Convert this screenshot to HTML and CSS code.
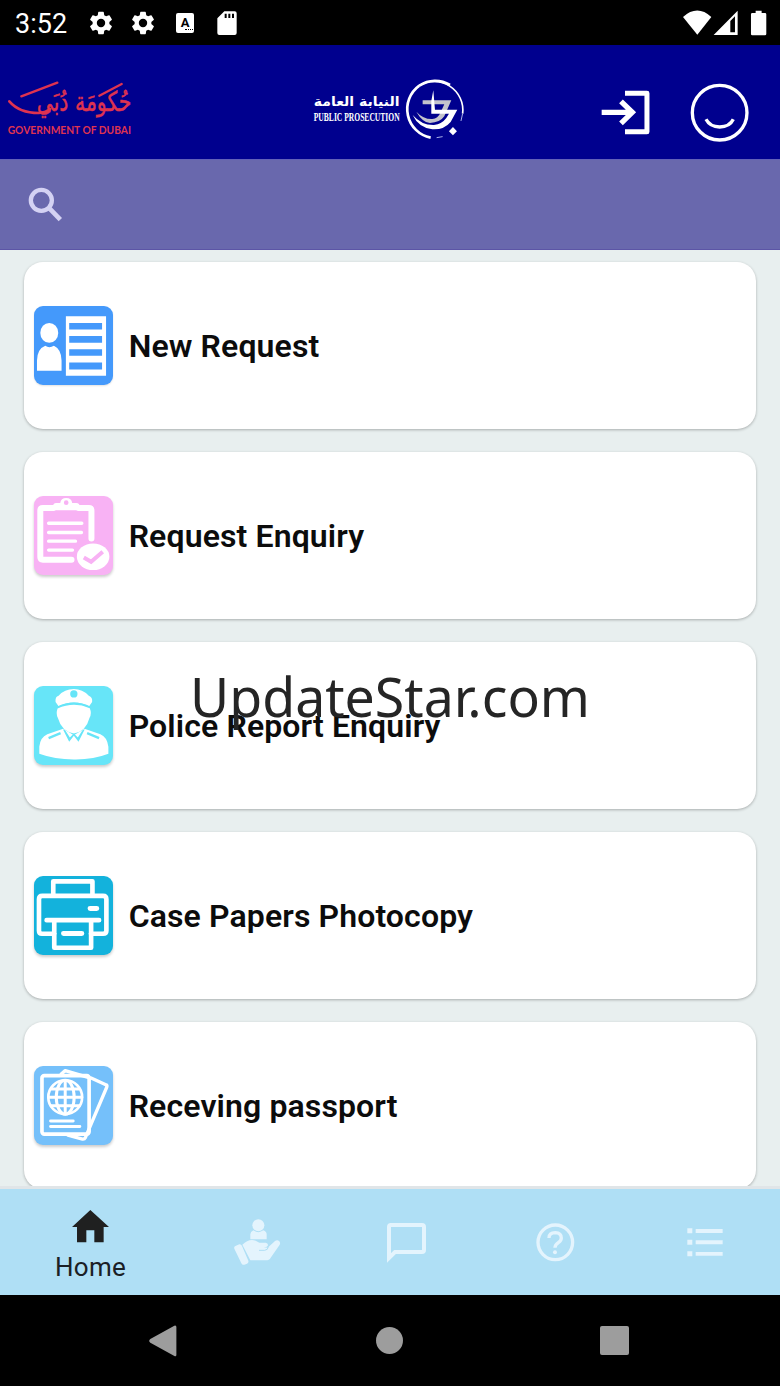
FILE: index.html
```html
<!DOCTYPE html>
<html lang="en">
<head>
<meta charset="utf-8">
<title>Public Prosecution</title>
<link rel="stylesheet" href="styles.css">
</head>
<body>
<div class="phone">
  <div class="status-bar">
    <span class="time">3:52</span>
    <svg class="gear" viewBox="0 0 24 24"><path d="M19.14 12.94c.04-.3.06-.61.06-.94s-.02-.64-.07-.94l2.03-1.58a.49.49 0 0 0 .12-.61l-1.92-3.32a.488.488 0 0 0-.59-.22l-2.39.96c-.5-.38-1.03-.7-1.62-.94l-.36-2.54a.484.484 0 0 0-.48-.41h-3.84c-.24 0-.43.17-.47.41l-.36 2.54c-.59.24-1.13.57-1.62.94l-2.39-.96c-.22-.08-.47 0-.59.22L2.74 8.87c-.12.21-.08.47.12.61l2.03 1.58c-.05.3-.09.63-.09.94s.02.64.07.94l-2.03 1.58a.49.49 0 0 0-.12.61l1.92 3.32c.12.22.37.29.59.22l2.39-.96c.5.38 1.03.7 1.62.94l.36 2.54c.05.24.24.41.48.41h3.84c.24 0 .44-.17.47-.41l.36-2.54c.59-.24 1.13-.56 1.62-.94l2.39.96c.22.08.47 0 .59-.22l1.92-3.32c.12-.22.07-.47-.12-.61zM12 15.6A3.6 3.6 0 1 1 12 8.4a3.6 3.6 0 0 1 0 7.2z"/></svg>
    <svg class="gear" viewBox="0 0 24 24"><path d="M19.14 12.94c.04-.3.06-.61.06-.94s-.02-.64-.07-.94l2.03-1.58a.49.49 0 0 0 .12-.61l-1.92-3.32a.488.488 0 0 0-.59-.22l-2.39.96c-.5-.38-1.03-.7-1.62-.94l-.36-2.54a.484.484 0 0 0-.48-.41h-3.84c-.24 0-.43.17-.47.41l-.36 2.54c-.59.24-1.13.57-1.62.94l-2.39-.96c-.22-.08-.47 0-.59.22L2.74 8.87c-.12.21-.08.47.12.61l2.03 1.58c-.05.3-.09.63-.09.94s.02.64.07.94l-2.03 1.58a.49.49 0 0 0-.12.61l1.92 3.32c.12.22.37.29.59.22l2.39-.96c.5.38 1.03.7 1.62.94l.36 2.54c.05.24.24.41.48.41h3.84c.24 0 .44-.17.47-.41l.36-2.54c.59-.24 1.13-.56 1.62-.94l2.39.96c.22.08.47 0 .59-.22l1.92-3.32c.12-.22.07-.47-.12-.61zM12 15.6A3.6 3.6 0 1 1 12 8.4a3.6 3.6 0 0 1 0 7.2z"/></svg>
    <span class="keyboard-badge">A<i></i></span>
    <svg class="sd" viewBox="650 32 60 72"><path fill-rule="evenodd" d="M672 33h31q6 0 6 6v59q0 6-6 6h-46q-6 0-6-6V54zM673 40v13h6V40zM684 40v13h6V40zM695 40v13h6V40z"/></svg>
    <svg class="radio" viewBox="307 28 250 77">
      <path d="M307 49Q350 10 392 49L350 102z"/>
      <path fill-rule="evenodd" d="M399 103L471 30V103zM449 61V95H463V47z"/>
      <path d="M525 30h18v7h10q4 0 4 4v59q0 4-4 4h-38q-4 0-4-4V41q0-4 4-4h10z"/>
    </svg>
  </div>

  <header class="header">
    <svg class="gov-logo" viewBox="0 0 420 195">
      <g class="script-strokes">
        <path d="M64 64L172 23" stroke-width="7"/>
        <path d="M28 79Q58 114 116 114Q140 112 150 102" stroke-width="8"/>
        <path d="M298 62L365 27" stroke-width="7"/>
      </g>
      <text class="gov-arabic" x="394" y="107" textLength="284" lengthAdjust="spacingAndGlyphs" direction="rtl">حُكومَة دُبَي</text>
      <text class="gov-latin" x="23" y="178" textLength="370" lengthAdjust="spacingAndGlyphs">GOVERNMENT OF DUBAI</text>
    </svg>
    <svg class="pp-logo" viewBox="66 50 462 190">
      <text class="pp-arabic" x="329" y="137" textLength="258" lengthAdjust="spacingAndGlyphs" direction="rtl">النيابة العامة</text>
      <text class="pp-latin" x="71" y="181" textLength="258" lengthAdjust="spacingAndGlyphs">PUBLIC PROSECUTION</text>
      <path d="M388 76A86 86 0 0 1 518 160" fill="none" stroke="#fff" stroke-width="5"/>
      <path d="M422 232A87 87 0 0 1 388 76" fill="none" stroke="#fff" stroke-width="8"/>
      <path d="M388 76A86 86 0 0 1 480 74" fill="none" stroke="#fff" stroke-width="8"/>
      <path d="M518 160l-5 22M458 229l-18 3" stroke="#aab0e8" stroke-width="3"/>
      <path d="M398 120H484L463 168Q450 187 420 188Q398 187 379 154Q400 177 427 176Q444 175 451 158L463 132H398z" fill="#c3c3cc"/>
      <path d="M430 90L435 148H502L482 185Q462 209 427 207Q386 202 368 164Q395 195 432 194Q456 191 469 173L477 160H424V122z" fill="#fff"/>
      <path d="M489 200L501 213L489 225L477 213z" fill="#fff"/>
    </svg>
    <svg class="login" viewBox="64 270 148 134"><path d="M66 337H158M124 304L158 337L124 370" stroke-width="16"/><path d="M136 280H202V395H136" stroke-width="15" stroke-linejoin="round"/></svg>
    <svg class="smile" viewBox="334 248 178 178"><circle cx="423" cy="337" r="82" stroke-width="10"/><path d="M382 357Q394 380 423 380Q453 380 464 357" stroke-width="10"/></svg>
  </header>

  <div class="search">
    <svg viewBox="84 82 104 104"><circle cx="124" cy="122" r="31.500" fill="none" stroke-width="13"/><path d="M149 147L181 180" stroke-width="14"/></svg>
  </div>

  <main class="list">
    <section class="card">
      <svg class="tile blue" viewBox="102 438 240 240">
        <ellipse cx="148" cy="519" rx="27" ry="30"/>
        <path d="M111 633V602Q112 567 136 558Q148 567 162 558Q184 568 185 602V633zM198 469H319V648H198z"/>
        <path class="cut" d="M208 489h99v20h-99zM208 528h99v21h-99zM208 568h99v20h-99zM208 608h99v21h-99z"/>
      </svg>
      <h2>New Request</h2>
    </section>
    <section class="card">
      <svg class="tile pink" viewBox="42 48 240 240">
        <path class="line" stroke-width="18" d="M101 84H69Q61 84 61 92V232Q61 240 69 240H155M176 84H207Q215 84 215 92V176"/>
        <path fill-rule="evenodd" d="M109 69h12q2-15 18-15t18 15h12q11 1 11 11t-11 11h-60q-10-1-10-11t10-11zM132 68a7 7 0 1 0 14 0a7 7 0 1 0-14 0"/>
        <path class="line" stroke-width="10" d="M86 130H186M86 158H185M86 184H167M86 211H158"/>
        <ellipse cx="220" cy="231" rx="49" ry="40"/>
        <path class="cut-line" stroke-width="12" d="M192 233L214 246L249 216"/>
      </svg>
      <h2>Request Enquiry</h2>
    </section>
    <section class="card">
      <svg class="tile aqua" viewBox="42 48 240 240">
        <path d="M107 96Q105 80 116 77Q134 57 162 57Q188 57 207 77Q219 81 217 96L208 109Q163 86 116 109z"/>
        <path d="M113 116Q162 94 210 115Q217 131 209 144Q199 184 162 191Q125 184 114 144Q107 132 113 116z"/>
        <path d="M58 252V230Q61 202 82 193L130 177L162 196L194 177L242 193Q263 202 266 231V252Q220 270 162 269Q104 269 58 252z"/>
        <circle class="cut" cx="162" cy="72" r="11"/>
        <path class="cut-line" stroke-width="7" d="M86 205L122 190M238 205L202 190"/>
        <path class="cut" d="M129 178L148 216L162 198L176 216L195 178L188 181L174 203L162 191L150 203L136 181z"/>
        <path class="cut-line" stroke-width="4" d="M112 112Q162 88 212 112"/>
      </svg>
      <h2>Police Report Enquiry</h2>
    </section>
    <section class="card">
      <svg class="tile teal" viewBox="42 48 240 240">
        <path class="line" stroke-width="14" d="M100 104V64H218V104M104 222H66Q57 222 57 213V118Q57 108 67 108H250Q260 108 260 118V213Q260 222 250 222H213M80 181H238M103 184V264H214V184"/>
        <path class="line" stroke-width="15" d="M211 146H231M131 221H186"/>
      </svg>
      <h2>Case Papers Photocopy</h2>
    </section>
    <section class="card">
      <svg class="tile sky" viewBox="42 48 240 240">
        <path class="line" stroke-width="10" d="M124 72L136 62L210 84M214 84L260 105Q263 106 261 112L197 263Q194 269 188 268L144 256"/>
        <rect class="line" x="66" y="77" width="142" height="176" rx="7" stroke-width="11"/>
        <circle class="line" cx="136" cy="142" r="51" stroke-width="8"/>
        <ellipse class="line" cx="136" cy="142" rx="27" ry="51" stroke-width="9"/>
        <path class="line" stroke-width="9" d="M136 92V192M94 117H178M86 142H186M94 168H178"/>
        <path class="line" stroke-width="9" d="M92 214H160M92 230H180"/>
      </svg>
      <h2>Receving passport</h2>
    </section>
  </main>

  <nav class="tabs">
    <a class="tab active">
      <svg class="home" viewBox="217 119 111 97"><path d="M272 119L328 170H312V216H284V180H260V216H232V170H217z"/></svg>
      <span>Home</span>
    </a>
    <a class="tab">
      <svg class="hand" viewBox="701 146 140 138"><circle cx="774" cy="165" r="18"/><path d="M750 207V192Q750 184 759 180Q774 191 789 180Q799 184 799 192V207zM705 227l12-5q5-1 8 5l19 44q2 6-4 9l-8 3q-6 2-9-4l-21-44q-2-5 3-8zM726 223Q746 203 766 211L777 217H796Q805 219 802 227Q799 231 790 231L802 232L824 212Q831 207 837 213Q842 219 836 226L811 262Q807 270 796 270H750z"/><path class="hand-line" d="M776 240H793Q803 239 804 229"/></svg>
    </a>
    <a class="tab">
      <svg class="chat" viewBox="0 0 38 38"><path d="M3 2H35Q37 2 37 4V27Q37 29 35 29H8L2 35V4Q2 2 4 2z"/></svg>
    </a>
    <a class="tab">
      <svg class="help" viewBox="440 158 115 115"><circle cx="498" cy="216" r="52"/><path d="M479 203Q479 187 498 187Q516 188 516 203Q516 211 507 217Q497 224 497 232"/><circle class="dot" cx="497" cy="246" r="6"/></svg>
    </a>
    <a class="tab">
      <svg class="menu" viewBox="892 173 108 86"><path d="M893 174h15v15h-15zM893 208h15v15h-15zM893 243h15v15h-15zM918 176h81v12h-81zM918 210h81v12h-81zM918 245h81v11h-81z"/></svg>
    </a>
  </nav>

  <div class="system-nav">
    <svg class="back" viewBox="446 464 83 95"><path d="M450 506L522 466Q528 464 528 470V553Q528 560 522 557L450 517Q443 512 450 506z"/></svg>
    <i class="circle"></i>
    <i class="square"></i>
  </div>
  <svg class="watermark" viewBox="0 0 420 70"><text x="10" y="48" textLength="400" lengthAdjust="spacingAndGlyphs">UpdateStar.com</text></svg>
</div>
</body>
</html>
```
FILE: styles.css
```css
* { box-sizing: border-box; }
body { margin: 0; font-family: Roboto, "Liberation Sans", sans-serif; }
svg { display: block; flex: none; overflow: visible; }
.phone {
  position: relative;
  display: flex;
  flex-direction: column;
  width: 780px;
  height: 1386px;
  overflow: hidden;
  background: #e8efef;
}

.status-bar {
  display: flex;
  align-items: center;
  height: 45px;
  padding: 0 14px 0 15px;
  background: #000;
  color: #fff;
  fill: #fff;
}
.time { width: 72px; font-size: 27px; line-height: 45px; padding-top: 3px; }
.gear { width: 28px; height: 28px; margin-right: 14px; }
.keyboard-badge {
  display: flex;
  flex-direction: column;
  align-items: center;
  width: 18px;
  height: 20px;
  margin: 0 23px 0 5px;
  padding-top: 3px;
  border-radius: 2px;
  background: #fff;
  color: #000;
  font-size: 13px;
  font-weight: 700;
  line-height: 13px;
}
.keyboard-badge i { width: 8px; margin-left: 8px; border-top: 1px dotted #000; }
.sd { width: 20px; height: 24px; }
.radio { width: 83.3px; height: 25.7px; margin-left: auto; }

.header {
  display: flex;
  align-items: center;
  height: 114px;
  padding-top: 20px;
  background: #00008e;
}
.gov-logo { width: 140px; height: 65px; margin-top: -9px; }
.script-strokes { fill: none; stroke: #df3350; stroke-linecap: round; }
.gov-arabic { font: 82px "DejaVu Sans", sans-serif; fill: #df3350; stroke: #df3350; stroke-width: 1.5px; }
.gov-latin { font: 700 34px Lato, sans-serif; fill: #df3350; }
.pp-logo { width: 154px; height: 63.3px; margin: -7px 136px 0 172px; }
.pp-arabic { font: 700 39px "DejaVu Sans", sans-serif; fill: #fff; }
.pp-latin { font: 700 38px "Liberation Serif", serif; fill: #fff; }
.login, .smile { fill: none; stroke: #fff; }
.login { width: 49.3px; height: 44.7px; margin: 1px 40px 0 -1px; }
.smile { width: 59.3px; height: 59.3px; margin-top: 1px; }

.search {
  display: flex;
  align-items: center;
  height: 91px;
  padding-left: 28px;
  border-top: 1px solid #6261b7;
  border-bottom: 1px solid #5c55a6;
  background: #6968ad;
}
.search svg { width: 34.7px; height: 34.7px; stroke: #d4d2f3; }

.list {
  display: flex;
  flex-direction: column;
  gap: 23px;
  height: 936px;
  padding: 12px 24px 0;
  overflow: hidden;
}
.card {
  display: flex;
  flex: none;
  align-items: center;
  gap: 15.3px;
  height: 167px;
  padding-left: 9.7px;
  border-radius: 19px;
  background: #fff;
  box-shadow: 0 1px 3px rgba(0, 0, 0, .28);
}
.card h2 { margin: 0; color: #0c0c0c; font-size: 32px; font-weight: 600; line-height: 40px; letter-spacing: .12px; }
.tile {
  width: 79.700px;
  height: 79.700px;
  border-radius: 9px;
  background: var(--tile);
  box-shadow: 0 2px 3px rgba(0, 0, 0, .2);
  fill: #fff;
}
.blue { --tile: #4499fb; box-shadow: 0 1px 2px rgba(0, 0, 0, .12); }
.pink { --tile: #f8b2f4; }
.aqua { --tile: #67e5f8; }
.teal { --tile: #13b2dc; }
.sky { --tile: #75c0fa; }
.line { fill: none; stroke: #fff; stroke-linecap: round; stroke-linejoin: round; }
.cut { fill: var(--tile); }
.cut-line { fill: none; stroke: var(--tile); }

.tabs {
  display: grid;
  grid-template-columns: 181px 152px 146px 153px 148px;
  height: 109px;
  padding-top: 3px;
  background: linear-gradient(#e0e5e8 0 3px, #afdff5 3px);
}
.tab { display: flex; flex-direction: column; align-items: center; justify-content: center; fill: #e4f4fd; }
.active { justify-content: flex-start; padding-top: 21px; color: #1b2025; fill: #1f2020; font-size: 26px; line-height: 30px; letter-spacing: .3px; }
.home { width: 37px; height: 32.3px; margin-bottom: 10px; }
.hand { width: 46.7px; height: 46px; }
.hand-line { fill: none; stroke: #afdff5; stroke-width: 3; }
.chat { width: 38px; height: 38px; fill: none; stroke: #e4f4fd; stroke-width: 4; }
.help { width: 38.3px; height: 38.3px; fill: none; stroke: #e4f4fd; stroke-width: 10; }
.help .dot { fill: #e4f4fd; stroke: none; }
.menu { width: 36px; height: 28.7px; margin-right: 2px; }

.system-nav {
  display: flex;
  align-items: center;
  height: 91px;
  padding-left: 149px;
  background: #000;
}
.back { width: 27.7px; height: 31.7px; fill: #9d9d9d; }
.circle { width: 27px; height: 27px; margin-left: 199.5px; border-radius: 50%; background: #9d9d9d; }
.square { width: 29px; height: 29px; margin-left: 196.5px; border-radius: 2px; background: #9d9d9d; }

.watermark { position: absolute; left: 180px; top: 669px; width: 420px; height: 70px; fill: #252525; font: 54px "Noto Sans", "Open Sans", sans-serif; }
```
